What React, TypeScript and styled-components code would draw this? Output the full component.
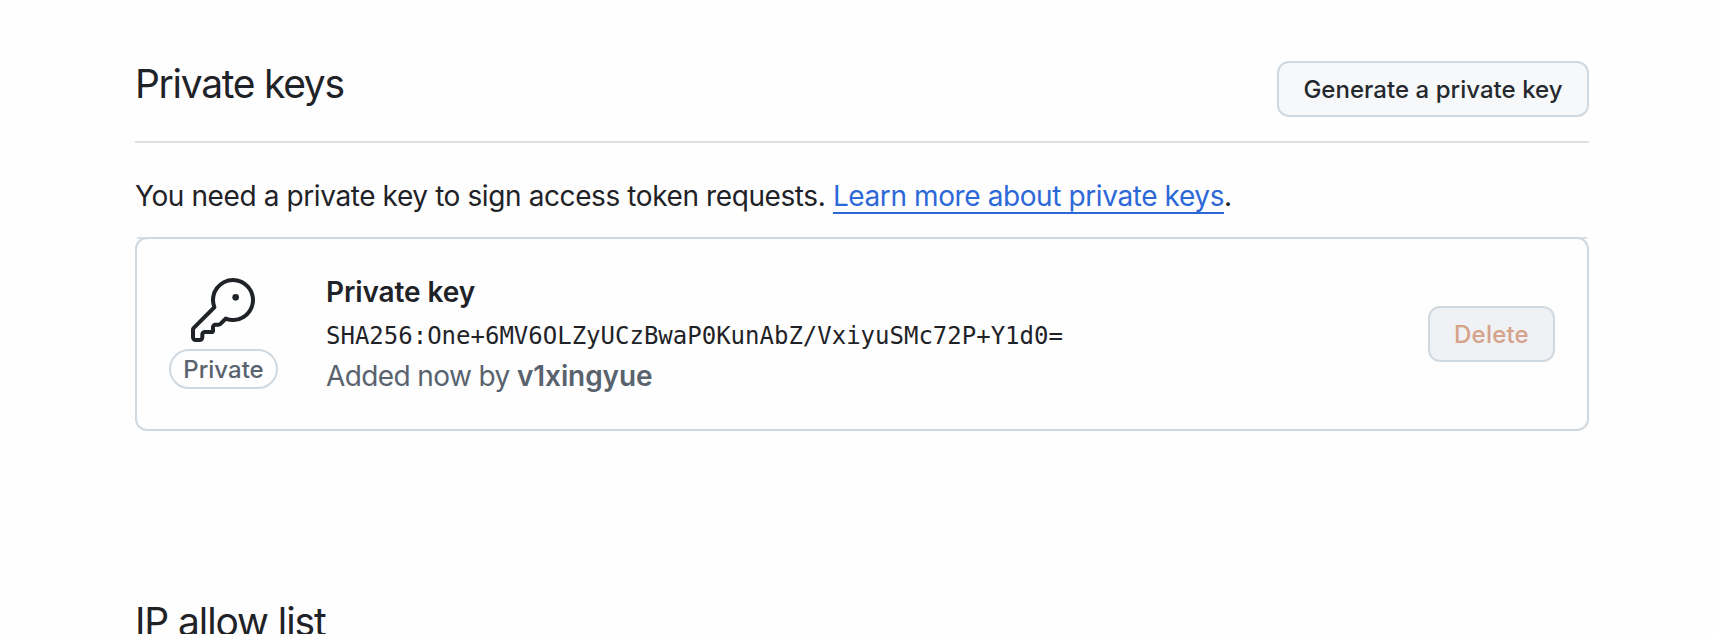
import React from "react";
import styled, { createGlobalStyle } from "styled-components";

const GlobalStyle = createGlobalStyle`
  * { box-sizing: border-box; }
  html, body { margin: 0; background: #fefefe; }
  body {
    height: 634px;
    overflow: hidden;
    color: #1f2328;
    font-family: Inter, "Liberation Sans", sans-serif;
    font-size: 28px;
    line-height: 42px;
  }
`;

const Page = styled.main`
  width: 1454px;
  margin: 0 0 0 135px;
  padding-top: 61px;
`;

const Subhead = styled.header`
  display: flex;
  justify-content: space-between;
  align-items: flex-start;
  height: 82px;
  border-bottom: 2px solid #dce1e6;
`;

const Heading = styled.h2<{ $spacing: number }>`
  margin: 0;
  font-size: 39px;
  font-weight: 430;
  line-height: 46px;
  letter-spacing: ${(p) => p.$spacing}px;
  white-space: nowrap;
`;

const Button = styled.button<{ $width: number; $danger?: boolean }>`
  width: ${(p) => p.$width}px;
  height: 56px;
  flex: none;
  padding: 2px 0 0;
  border: 2px solid #d1d9e0;
  border-radius: 12px;
  background: ${(p) => (p.$danger ? "#eff1f5" : "#f6f8fa")};
  color: ${(p) => (p.$danger ? "#d4a389" : "#25292e")};
  font-family: inherit;
  font-size: 24px;
  font-weight: 500;
  line-height: 50px;
  letter-spacing: ${(p) => (p.$danger ? 0.2 : 0.04)}px;
  white-space: nowrap;
`;

const Intro = styled.p`
  margin: 32px 0 20px;
  letter-spacing: -0.4px;
  white-space: nowrap;
`;

const Link = styled.a`
  display: inline-block;
  height: 39px;
  border-bottom: 2px solid #2d68d8;
  color: #2d68d8;
  text-decoration: none;
`;

const ListTop = styled.div`
  height: 2px;
  margin: 0 2px -2px;
  background: #d9dfe5;
`;

const KeyCard = styled.section`
  display: flex;
  align-items: center;
  height: 194px;
  padding: 0 32px;
  border: 2px solid #d1d9e0;
  border-radius: 12px;
`;

const KeyType = styled.div`
  display: flex;
  flex-direction: column;
  align-items: center;
  gap: 7px;
  width: 109px;
  margin-right: 48px;
  padding-bottom: 2px;

  svg { margin-right: 2px; }
`;

const Badge = styled.span`
  width: 109px;
  height: 40px;
  border: 2px solid #d1d9e0;
  border-radius: 20px;
  color: #59636e;
  font-size: 24px;
  font-weight: 500;
  line-height: 37px;
  text-align: center;
`;

const Details = styled.div`
  flex: 1;
  padding-bottom: 4px;
  white-space: nowrap;
`;

const Title = styled.div`
  font-weight: 600;
  letter-spacing: -0.1px;
`;

const Fingerprint = styled.code`
  display: block;
  font-family: "DejaVu Sans Mono", monospace;
  font-size: 24px;
  line-height: 46px;
`;

const Added = styled.div`
  color: #59636e;
  line-height: 34px;
  letter-spacing: -0.6px;

  strong {
    font-weight: 600;
    letter-spacing: -0.1px;
  }
`;

const NextSection = styled.section`
  padding-top: 168px;
`;

const KeyIcon = () => (
  <svg width="64" height="64" viewBox="0 0 24 24" fill="#1f2328" aria-hidden="true">
    <path d="M16.75 8.5a1.25 1.25 0 1 0 0-2.5 1.25 1.25 0 0 0 0 2.5Z" />
    <path d="M15.75 0a8.25 8.25 0 1 1-2.541 16.101l-1.636 1.636a1.744 1.744 0 0 1-1.237.513H9.25a.25.25 0 0 0-.25.25v1.448a.876.876 0 0 1-.256.619l-.214.213a.75.75 0 0 1-.545.22H5.25a.25.25 0 0 0-.25.25v1A1.75 1.75 0 0 1 3.25 24h-1.5A1.75 1.75 0 0 1 0 22.25v-2.836c0-.464.185-.908.513-1.236l7.386-7.388A8.249 8.249 0 0 1 15.75 0ZM9 8.25a6.733 6.733 0 0 0 .463 2.462.75.75 0 0 1-.168.804l-7.722 7.721a.25.25 0 0 0-.073.177v2.836c0 .138.112.25.25.25h1.5a.25.25 0 0 0 .25-.25v-1c0-.966.784-1.75 1.75-1.75H7.5v-1c0-.966.784-1.75 1.75-1.75h1.086a.25.25 0 0 0 .177-.073l1.971-1.972a.75.75 0 0 1 .804-.168A6.75 6.75 0 1 0 9 8.25Z" />
  </svg>
);

export default function App() {
  return (
    <>
      <GlobalStyle />
      <Page>
        <Subhead>
          <Heading $spacing={-1.3}>Private keys</Heading>
          <Button $width={312}>Generate a private key</Button>
        </Subhead>
        <Intro>
          You need a private key to sign access token requests.{" "}
          <Link>Learn more about private keys</Link>.
        </Intro>
        <ListTop />
        <KeyCard>
          <KeyType>
            <KeyIcon />
            <Badge>Private</Badge>
          </KeyType>
          <Details>
            <Title>Private key</Title>
            <Fingerprint>SHA256:One+6MV6OLZyUCzBwaP0KunAbZ/VxiyuSMc72P+Y1d0=</Fingerprint>
            <Added>
              Added now by <strong>v1xingyue</strong>
            </Added>
          </Details>
          <Button $width={127} $danger disabled>
            Delete
          </Button>
        </KeyCard>
        <NextSection>
          <Heading $spacing={-1.1}>IP allow list</Heading>
        </NextSection>
      </Page>
    </>
  );
}
